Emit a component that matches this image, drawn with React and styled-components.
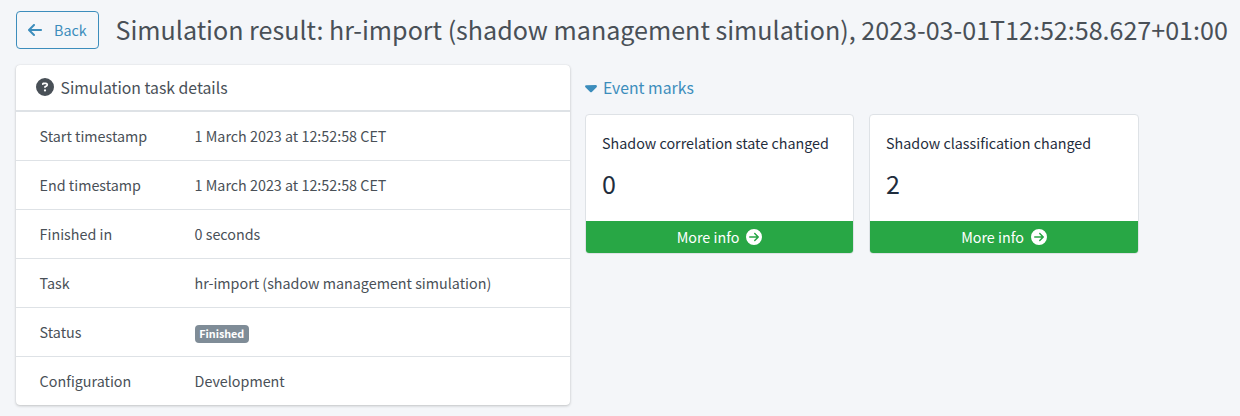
import React from 'react';
import styled, { createGlobalStyle } from 'styled-components';
import { FaArrowLeft, FaCircleQuestion, FaCaretDown, FaCircleArrowRight } from 'react-icons/fa6';

const GlobalStyle = createGlobalStyle`
  *, *::before, *::after { box-sizing: border-box; }
  body {
    margin: 0;
    background: #f4f6f9;
    color: #495057;
    font-family: "Source Sans Pro", "Noto Sans CJK SC", "Noto Sans", sans-serif;
    font-size: 14.32px;
    line-height: 24px;
  }
`;

const Page = styled.div`
  min-height: 416px;
  padding: 11px 0 0 16px;
`;

const Header = styled.header`
  display: flex;
  align-items: flex-start;
  height: 54px;
`;

const BackButton = styled.button`
  display: flex;
  flex: none;
  align-items: center;
  width: 83px;
  height: 38px;
  padding: 0 0 0 11.4px;
  border: 1px solid #3c8dbc;
  border-radius: 4px;
  background: transparent;
  color: #3c8dbc;
  font: inherit;

  svg { width: 14px; height: 16px; margin-right: 11.6px; flex: none; }
`;

const Title = styled.h1`
  margin: 1px 0 0 16.5px;
  font-size: 25.08px;
  font-weight: 400;
  line-height: 34px;
  white-space: nowrap;
`;

const Content = styled.main`
  display: flex;
  align-items: flex-start;
  gap: 15px;
`;

const DetailsCard = styled.section`
  width: 554px;
  border-radius: 4px;
  background: #fff;
  box-shadow: 0 0 1px rgba(0, 0, 0, 0.125), 0 1px 3px rgba(0, 0, 0, 0.2);
`;

const CardHeader = styled.h3`
  display: flex;
  align-items: center;
  height: 47px;
  margin: 0;
  padding-left: 19.5px;
  border-bottom: 2px solid #dee2e6;
  font-size: 15.77px;
  font-weight: 400;

  svg { width: 18px; height: 18px; margin: 0 7px 1px 0; }
`;

const DetailRow = styled.div`
  display: grid;
  grid-template-columns: 155px 1fr;
  align-items: center;
  height: 49px;
  padding-left: 23.6px;

  & + & { border-top: 1px solid #dee2e6; }
  &:nth-child(2) { height: 48px; }
`;

const Badge = styled.span`
  display: inline-block;
  height: 18px;
  padding: 0 4.6px;
  border-radius: 4px;
  background: #7f8c97;
  color: #fff;
  font-size: 10.75px;
  font-weight: 700;
  line-height: 18px;
  vertical-align: middle;
`;

const Marks = styled.section`
  display: flex;
  flex-direction: column;
`;

const MarksToggle = styled.a`
  display: flex;
  align-items: center;
  height: 49px;
  padding-bottom: 3px;
  color: #3c8dbc;
  font-size: 15.77px;

  svg { width: 12px; height: 19px; margin: 0 6.4px 1px -0.4px; }
`;

const MarkList = styled.div`
  display: flex;
  gap: 15px;
`;

const MarkCard = styled.article`
  width: ${(p) => p.$width}px;
  height: 140px;
  border: 1px solid #dee2e6;
  border-radius: 4px;
  overflow: hidden;
  background: #fff;
  color: #1f2d3d;
`;

const MarkBody = styled.div`
  height: 106px;
  padding: 16px 16px 0;
`;

const MarkName = styled.div`
  line-height: 24px;
`;

const MarkCount = styled.div`
  margin-top: 11px;
  font-size: 25.08px;
  line-height: 34px;
`;

const MoreInfo = styled.a`
  display: flex;
  align-items: center;
  justify-content: center;
  height: 32px;
  background: #28a745;
  color: #fff;

  svg { width: 16px; height: 16px; margin-left: 7px; }
`;

const details = [
  ['Start timestamp', '1 March 2023 at 12:52:58 CET'],
  ['End timestamp', '1 March 2023 at 12:52:58 CET'],
  ['Finished in', '0 seconds'],
  ['Task', 'hr-import (shadow management simulation)'],
  ['Status', <Badge key="status">Finished</Badge>],
  ['Configuration', 'Development'],
];

const marks = [
  { name: 'Shadow correlation state changed', count: 0, width: 269 },
  { name: 'Shadow classification changed', count: 2, width: 270 },
];

export default function App() {
  return (
    <Page>
      <GlobalStyle />
      <Header>
        <BackButton><FaArrowLeft />Back</BackButton>
        <Title>Simulation result: hr-import (shadow management simulation), 2023-03-01T12:52:58.627+01:00</Title>
      </Header>
      <Content>
        <DetailsCard>
          <CardHeader><FaCircleQuestion />Simulation task details</CardHeader>
          {details.map(([label, value]) => (
            <DetailRow key={label}>
              <span>{label}</span>
              <span>{value}</span>
            </DetailRow>
          ))}
        </DetailsCard>
        <Marks>
          <MarksToggle><FaCaretDown />Event marks</MarksToggle>
          <MarkList>
            {marks.map((mark) => (
              <MarkCard key={mark.name} $width={mark.width}>
                <MarkBody>
                  <MarkName>{mark.name}</MarkName>
                  <MarkCount>{mark.count}</MarkCount>
                </MarkBody>
                <MoreInfo>More info<FaCircleArrowRight /></MoreInfo>
              </MarkCard>
            ))}
          </MarkList>
        </Marks>
      </Content>
    </Page>
  );
}
